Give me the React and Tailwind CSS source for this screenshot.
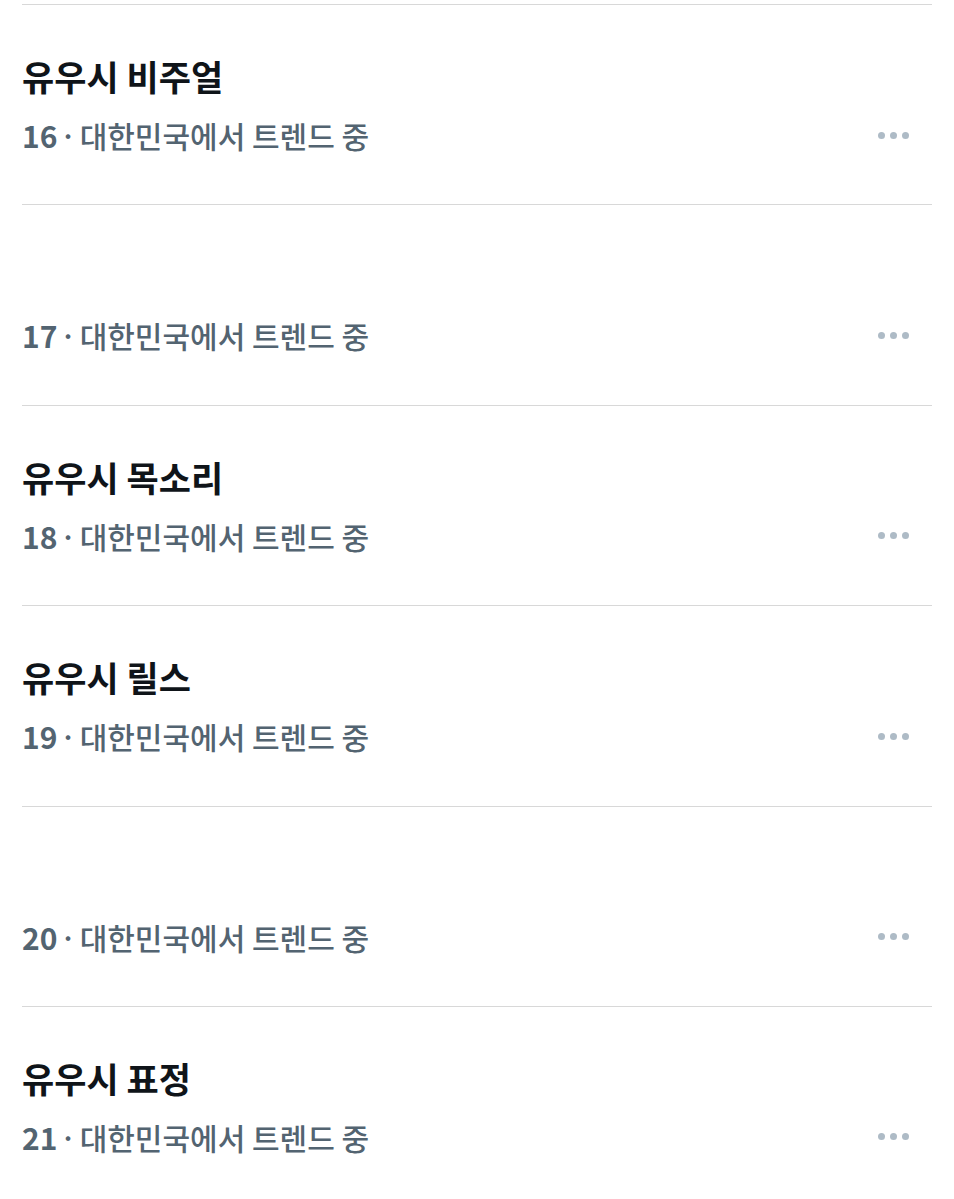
import React from 'react';

const trends = [
  { rank: 16, title: '유우시 비주얼' },
  { rank: 17, title: '' },
  { rank: 18, title: '유우시 목소리' },
  { rank: 19, title: '유우시 릴스' },
  { rank: 20, title: '' },
  { rank: 21, title: '유우시 표정' },
];

const MoreDots = () => (
  <div className="flex items-center gap-[5px] mr-[23px]">
    <span className="w-[7px] h-[7px] rounded-full bg-[#aebbc6]" />
    <span className="w-[7px] h-[7px] rounded-full bg-[#aebbc6]" />
    <span className="w-[7px] h-[7px] rounded-full bg-[#aebbc6]" />
  </div>
);

const TrendRow = ({ rank, title }) => (
  <div className="h-[200.4px] border-b border-[#d8d8d8] pt-[50px]">
    <div className="h-[42px] text-[35px] leading-[42px] font-bold text-[#0f1419]">
      {title}
    </div>
    <div className="mt-[19px] flex items-center justify-between">
      <p className="text-[30px] leading-[38px] font-medium text-[#536471] flex items-center">
        <span className="font-semibold">{rank}</span>
        <span className="ml-[2px] mr-[3px]">·</span>
        <span>대한민국에서 트렌드 중</span>
      </p>
      <MoreDots />
    </div>
  </div>
);

export default function App() {
  return (
    <div
      className="w-[954px] min-h-[1199px] bg-white overflow-hidden"
      style={{ fontFamily: '"Noto Sans CJK KR", "Noto Sans", sans-serif' }}
    >
      <div className="mx-[22px] mt-[4px] border-t border-[#d8d8d8]">
        {trends.map((t) => (
          <TrendRow key={t.rank} {...t} />
        ))}
      </div>
    </div>
  );
}
